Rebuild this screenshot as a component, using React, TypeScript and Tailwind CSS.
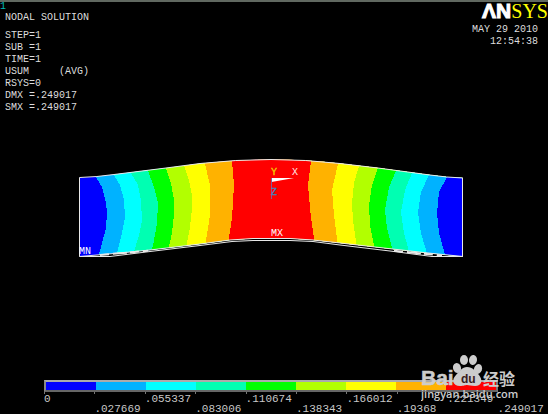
const colors = [
  '#0000ff',
  '#00b2ff',
  '#00ffff',
  '#00ffb2',
  '#00ff00',
  '#b2ff00',
  '#ffff00',
  '#ffb200',
  '#ff0000',
];

const legendValues = [
  '0',
  '.027669',
  '.055337',
  '.083006',
  '.110674',
  '.138343',
  '.166012',
  '.19368',
  '.221349',
  '.249017',
];

const info = [
  'STEP=1',
  'SUB =1',
  'TIME=1',
  'USUM     (AVG)',
  'RSYS=0',
  'DMX =.249017',
  'SMX =.249017',
];

// Level boundaries from left to right; each one starts the next colour band.
const bands = [
  { fill: colors[1], edge: '96,174 96,177 102,187 106,203 107,213 106,228 102,243 98,258' },
  { fill: colors[2], edge: '114,172 114,175 120,185 124,200 125,217 122,233 116,257' },
  { fill: colors[3], edge: '130,170 131,173 138,185 141,200 142,221 139,235 133,255' },
  { fill: colors[4], edge: '147,168 148,171 154,187 158,203 157,223 153,246 150,252' },
  { fill: colors[5], edge: '165,165 166,168 171,183 174,200 174,215 172,233 168,251' },
  { fill: colors[6], edge: '183,163 184,166 189,180 192,195 192,208 190,227 186,248' },
  { fill: colors[7], edge: '204,160 205,164 210,185 210,215 205,247' },
  { fill: colors[8], edge: '231,157 232,161 234,185 232,218 228,244' },
  { fill: colors[7], edge: '311,157 311,161 308,185 311,218 315,245' },
  { fill: colors[6], edge: '339,160 338,164 332,190 334,215 338,247' },
  { fill: colors[5], edge: '360,163 359,166 354,183 352,203 353,220 357,248' },
  { fill: colors[4], edge: '379,165 378,168 372,185 369,205 370,225 375,251' },
  { fill: colors[3], edge: '397,168 396,171 389,187 385,210 387,228 393,252' },
  { fill: colors[2], edge: '413,170 412,173 405,190 401,212 404,233 410,255' },
  { fill: colors[1], edge: '431,172 429,175 421,192 418,213 421,233 428,257' },
  { fill: colors[0], edge: '448,174 447,177 439,192 437,213 439,233 446,258' },
];

const TOP = 'M79.5 177.5 Q97 177 114 174.5 L166 168 L200 163.5 Q236 159.5 271 159.5 Q306 159.5 340 163.5 L378 168 L430 175 Q447 177.5 463 178';
const BODY = `${TOP} V256.5 L428 253 L375 247 L340 243 L313 240 L290 238.5 H253 L230 240 L200 244 L150 250 L120 253 L79.5 256.5 Z`;

function ContourPlot() {
  return (
    <svg
      viewBox="0 150 548 115"
      className="block w-full"
      role="img"
      aria-label="Displacement contour plot"
      fontFamily="'Liberation Mono', monospace"
      fontSize="10"
    >
      <clipPath id="body">
        <path d={BODY} />
      </clipPath>
      <g clipPath="url(#body)" shapeRendering="crispEdges">
        <rect x="79" y="150" width="385" height="115" fill={colors[0]} />
        {bands.map((band, i) => (
          <polygon key={i} points={`${band.edge} 464,265 464,150`} fill={band.fill} />
        ))}
      </g>
      <g fill="none" stroke="#e8e8e8">
        <path d={TOP} />
        <path d="M79.5 177.5 V256.5 M462.5 178 V256.5" />
        <path d="M79.5 256.5 L120 253 L150 250 L200 244 L230 240 L253 238.5 H290 L313 240 L340 243 L375 247 L428 253 L463 256.5" />
        <path d="M79.5 256.5 H110 L150 251.5 L200 245.5 L232 241.5 L253 240.5 H290 L313 241.5 L340 245 L390 251 L432 256.5 H463" />
        <path d="M100 255 L148 250.8 M394 250.8 L442 255.5" strokeWidth="2" strokeDasharray="9 4 14 3" />
      </g>
      <text x="79" y="254" fill="#ffffff">MN</text>
      <text x="271" y="236" fill="#ffffff">MX</text>
      {/* Coordinate triad */}
      <path d="M271.5 178 H294 L271.5 182 Z" fill="#ffffff" />
      <path d="M271.5 178 V199" stroke="#7d5f96" />
      <text x="271" y="175" fill="#f0d000" stroke="#f0d000" strokeWidth="0.3">Y</text>
      <text x="292" y="175" fill="#ffe8e8">X</text>
      <text x="271" y="195" fill="#4a80b8" stroke="#4a80b8" strokeWidth="0.4">Z</text>
    </svg>
  );
}

function Legend() {
  return (
    <div className="ml-11 grid grid-cols-10 text-[11px] leading-[10px] text-[#c8c8c8]">
      <div className="col-span-9 grid h-3 grid-cols-9 border-2 border-t-[#aaaaaa] border-r-[#777777] border-b-[#666666] border-l-[#888888]">
        {colors.map((color) => (
          <div key={color} style={{ background: color }} />
        ))}
      </div>
      <div />
      {legendValues.map((value) => (
        <div key={value} className="h-0.5 border-l border-[#777777]" />
      ))}
      {legendValues.map((value, i) => (
        <span key={value} className={i % 2 ? 'whitespace-nowrap pt-[10px]' : 'whitespace-nowrap'}>
          {value}
        </span>
      ))}
    </div>
  );
}

function Watermark() {
  return (
    <div className="absolute right-7 bottom-3 text-[#cccccc]">
      <svg viewBox="0 0 99 50" width="99" height="50" fill="currentColor">
        <g fontFamily="'Liberation Sans', sans-serif" fontWeight="bold">
          <text x="0" y="33" fontSize="21" stroke="currentColor" strokeWidth="0.5">Bai</text>
        </g>
        <ellipse cx="36" cy="16" rx="4" ry="5" transform="rotate(-15 36 16)" />
        <ellipse cx="43" cy="8" rx="4" ry="5" />
        <ellipse cx="52" cy="8" rx="4" ry="5" transform="rotate(10 52 8)" />
        <ellipse cx="57" cy="17" rx="4" ry="5" transform="rotate(20 57 17)" />
        <path d="M46 15 C41 15 39 19 35 23 C30 28 32 34 39 34 C43 34 44 33 46 33 C48 33 50 34 54 34 C61 34 62 28 58 23 C54 19 52 15 46 15 Z" />
        <text x="40" y="31" fontSize="12" fontWeight="bold" fontFamily="'Liberation Sans', sans-serif" fill="#3a2020">du</text>
        <text x="62" y="33" fontSize="16" fontWeight="bold" fontFamily="'Noto Sans CJK SC', sans-serif">经验</text>
        <text x="0" y="46" fontSize="11" fontFamily="'Open Sans', sans-serif" fontWeight="600">jingyan.baidu.com</text>
      </svg>
    </div>
  );
}

export default function App() {
  return (
    <main className="relative flex min-h-screen flex-col overflow-hidden border-t-2 border-[#606860] bg-black font-['Liberation_Mono',monospace]">
      <header className="flex justify-between text-[10px] text-[#dddddd]">
        <div className="flex">
          <span className="w-[5px] leading-[10px] text-[#00b8b8]">1</span>
          <div className="pt-[10px]">
            <h1 className="leading-[12px]">NODAL SOLUTION</h1>
            <pre className="pt-1.5 font-['Liberation_Mono',monospace] leading-[12px]">{info.join('\n')}</pre>
          </div>
        </div>
        <div className="flex flex-col items-end">
          <div className="flex text-[20px] leading-[18px]">
            <span className="font-['Liberation_Sans',sans-serif] text-[21px] font-bold text-white [-webkit-text-stroke:1px_white]">ΛN</span>
            <span className="font-['Liberation_Serif',serif] text-[#ffff00]">SYS</span>
          </div>
          <div className="pt-1 pr-2.5 text-right leading-[12px]">
            <p>MAY 29 2010</p>
            <p>12:54:38</p>
          </div>
        </div>
      </header>
      <div className="pt-9">
        <ContourPlot />
      </div>
      <div className="mt-auto">
        <Legend />
      </div>
      <Watermark />
    </main>
  );
}
